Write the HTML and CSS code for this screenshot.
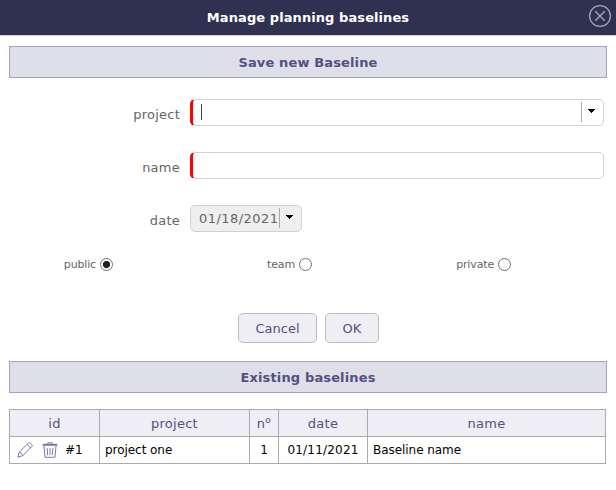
FILE: index.html
```
<!DOCTYPE html>
<html lang="en">
<head>
<meta charset="utf-8">
<title>Manage planning baselines</title>
<link rel="stylesheet" href="styles.css">
</head>
<body>
<main class="dialog">
  <header class="titlebar">
    <h1 class="title">Manage planning baselines</h1>
    <svg class="close" viewBox="0 0 24 24"><circle cx="12" cy="12" r="10.4"/><path d="M7.2 7.2l9.6 9.6M16.8 7.2l-9.6 9.6"/></svg>
  </header>
  <h2 class="section">Save new Baseline</h2>
  <form class="form">
    <div class="row">
      <label class="label">project</label>
      <div class="field required combo"><span class="caret"></span><span class="arrow"><svg viewBox="0 0 7 4"><path d="M0 0h7v1H6v1H5v1H4v1H3V3H2V2H1V1H0z"/></svg></span></div>
    </div>
    <div class="row">
      <label class="label">name</label>
      <div class="field required"></div>
    </div>
    <div class="row">
      <label class="label">date</label>
      <div class="field date"><span class="value">01/18/2021</span><span class="arrow"><svg viewBox="0 0 7 4"><path d="M0 0h7v1H6v1H5v1H4v1H3V3H2V2H1V1H0z"/></svg></span></div>
    </div>
    <div class="radios">
      <label class="choice"><span class="choice-text">public</span><span class="radio checked"></span></label>
      <label class="choice"><span class="choice-text">team</span><span class="radio"></span></label>
      <label class="choice"><span class="choice-text">private</span><span class="radio"></span></label>
    </div>
    <div class="buttons">
      <button type="button" class="button cancel">Cancel</button>
      <button type="button" class="button ok">OK</button>
    </div>
  </form>
  <h2 class="section">Existing baselines</h2>
  <table class="table">
    <colgroup><col class="c-id"><col class="c-project"><col class="c-no"><col class="c-date"><col class="c-name"></colgroup>
    <tr><th>id</th><th>project</th><th>n<span class="ordinal">º</span></th><th>date</th><th>name</th></tr>
    <tr>
      <td><div class="id-cell">
        <svg class="pencil" viewBox="0 0 16 16"><path d="M.8 15.2l1.4-5L11.3 1.1q1.2-.9 2.4.2l1.1 1.1q.9 1.1 0 2.2L5.8 13.7zM2.2 10.2q2.6.6 3.6 3.5M10.1 2.3l3.6 3.6"/></svg>
        <svg class="trash" viewBox="0 0 16 16"><path d="M.7 2.8h14.6" stroke-width="2"/><path d="M5.8 2V.8h4.4V2M2 4l1 11.3h10L14 4M5.1 6l.5 7.2M8 6v7.2M10.9 6l-.5 7.2"/></svg>
        <span class="id-text">#1</span></div></td>
      <td>project one</td><td class="center">1</td><td class="center day">01/11/2021</td><td>Baseline name</td>
    </tr>
  </table>
</main>
</body>
</html>
```
FILE: styles.css
```
* { box-sizing: border-box; }
body { margin: 0; background: #fff; font-family: Verdana, "DejaVu Sans", sans-serif; font-size: 13px; color: #656565; }
.dialog { width: 616px; height: 490px; overflow: hidden; }
.titlebar { height: 36px; background: #303050; border-bottom: 1px solid #d5d5de; display: grid; grid-template-columns: 1fr 24px; align-items: center; padding: 0 4px 4px 28px; }
.title { margin: 5px 0 0; font-size: 13px; line-height: 16px; color: #fff; text-align: center; letter-spacing: 0.08px; }
.close { width: 24px; height: 24px; fill: none; stroke: #a6a6b0; stroke-width: 1.3; }
.section { margin: 10px 9px 0; height: 32px; border: 1px solid #a3a0c8; background: #dfdfe9; color: #545081; font-size: 13px; line-height: 31px; text-align: center; letter-spacing: 0.14px; }
.form { height: 273px; padding-top: 21px; }
.row { display: flex; height: 27px; margin-bottom: 26px; }
.label { width: 180px; margin-right: 10px; text-align: right; line-height: 31px; letter-spacing: 0.25px; }
.field { display: flex; width: 414px; border: 1px solid #d2d2d2; border-radius: 5px; background: #fff; }
.required { border-left: 3px solid #f00; }
.combo { justify-content: space-between; }
.caret { width: 1px; height: 16px; margin: 4px 0 0 8px; background: #444; }
.arrow { width: 22px; height: 20px; margin-top: 2px; border-left: 1px solid #aaa; padding: 7px 0 0 6px; display: flex; }
.arrow svg { width: 7px; height: 4px; fill: #000; }
.date { width: 112px; background: #efefef; }
.value { width: 88px; padding-left: 8px; line-height: 26px; white-space: nowrap; letter-spacing: 0.45px; }
.radios { display: flex; font-size: 11px; height: 14px; margin-top: -1px; }
.choice { display: flex; justify-content: flex-end; align-items: center; gap: 4px; width: 113px; line-height: 14px; }
.choice:nth-child(2), .choice:nth-child(3) { width: 199px; }
.choice-text { letter-spacing: -0.15px; padding-top: 1px; }
.radio { width: 13px; height: 13px; border: 1px solid #707070; border-radius: 50%; background: #fff; }
.checked { background: radial-gradient(circle at center, #222 0 3.2px, #fff 4px); }
.buttons { display: flex; gap: 8px; padding: 42px 0 0 238px; }
.button { height: 30px; padding: 0; border: 1px solid #bebec2; border-radius: 5px; background: #efeef5; color: #545081; font: inherit; line-height: 28px; padding-top: 1px; }
.cancel { width: 79px; }
.ok { width: 54px; }
.table { width: 597px; margin: 16px 0 0 9px; border-collapse: collapse; table-layout: fixed; }
.c-id { width: 90px; }
.c-project { width: 150px; }
.c-no { width: 29px; }
.c-date { width: 89px; }
.c-name { width: 238px; }
.table th, .table td { height: 27px; border: 1px solid #aaa; padding: 0; line-height: 24px; white-space: nowrap; }
.table th { background: #efeef5; color: #545081; font-weight: normal; padding-top: 1px; letter-spacing: 0.25px; }
.ordinal { position: relative; top: 1px; font-family: "Open Sans", sans-serif; font-size: 15px; line-height: 1; }
.table td { color: #000; font-size: 12px; padding-left: 5px; letter-spacing: -0.05px; }
.table .center { text-align: center; padding-left: 0; }
.table .day { letter-spacing: 0.2px; }
.id-cell { display: flex; align-items: center; margin-left: 2px; }
.pencil, .trash { width: 16px; height: 16px; fill: none; stroke: #7a76b1; stroke-width: 1; }
.trash { margin-left: 9px; }
.id-text { margin-left: 7px; }
```
